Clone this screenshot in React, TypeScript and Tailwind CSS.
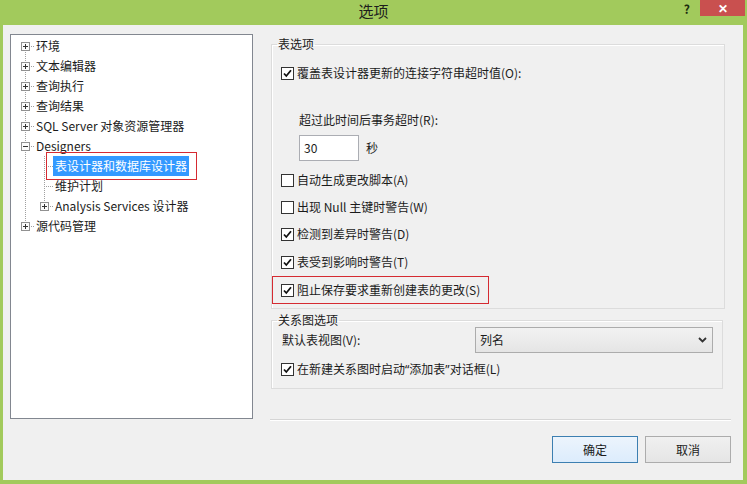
import React from "react";

const FONT = { fontFamily: '"Noto Sans CJK SC", "Noto Sans", sans-serif' };

type Line = "first" | "mid" | "last" | "none";

function Gutter({ w, cx, line, box, open }: { w: number; cx: number; line: Line; box?: boolean; open?: boolean }) {
  const x = cx + 0.5;
  const y1 = line === "first" ? 10 : 0;
  const y2 = line === "last" ? 10 : 20;
  return (
    <svg width={w} height={20} className="shrink-0">
      {line !== "none" && (
        <line x1={x} y1={y1} x2={x} y2={y2} stroke="#a0a0a0" strokeDasharray="1 1" />
      )}
      <line x1={cx} y1={10.5} x2={w} y2={10.5} stroke="#a0a0a0" strokeDasharray="1 1" />
      {box && (
        <g>
          <rect x={cx - 3.5} y={6.5} width={8} height={8} fill="#fbfbfb" stroke="#919191" />
          <line x1={cx - 2} y1={10.5} x2={cx + 3} y2={10.5} stroke="#333" />
          {!open && <line x1={x} y1={8} x2={x} y2={13} stroke="#333" />}
        </g>
      )}
    </svg>
  );
}

function Continue({ w, cx }: { w: number; cx: number }) {
  return (
    <svg width={w} height={20} className="shrink-0">
      <line x1={cx + 0.5} y1={0} x2={cx + 0.5} y2={20} stroke="#a0a0a0" strokeDasharray="1 1" />
    </svg>
  );
}

function Root({ label, line, open }: { label: string; line: Line; open?: boolean }) {
  return (
    <div className="flex h-[20px] items-center">
      <Gutter w={17} cx={8} line={line} box open={open} />
      <span className="pl-[2px] leading-[16px]">{label}</span>
    </div>
  );
}

function Child({ label, line, box, selected }: { label: string; line: Line; box?: boolean; selected?: boolean }) {
  return (
    <div className="flex h-[20px] items-center">
      <Continue w={17} cx={8} />
      <Gutter w={19} cx={10} line={line} box={box} />
      {selected ? (
        <span className="relative">
          <span className="block bg-[#3399ff] px-[2px] leading-[20px] text-white">{label}</span>
          <span className="absolute bottom-[-4px] left-[-7px] right-[-8px] top-[-4px] border border-[#d52a31]" />
        </span>
      ) : (
        <span className="pl-[2px] leading-[16px]">{label}</span>
      )}
    </div>
  );
}

function Check({ checked }: { checked?: boolean }) {
  return (
    <svg width={13} height={13} className="shrink-0">
      <rect x={0.5} y={0.5} width={12} height={12} fill="#fff" stroke="#333" />
      {checked && (
        <path d="M3 6.5 L5.3 9 L10 3.3" fill="none" stroke="#111" strokeWidth={1.8} />
      )}
    </svg>
  );
}

function CheckRow({ label, checked, className }: { label: React.ReactNode; checked?: boolean; className?: string }) {
  return (
    <div className={"flex h-[16px] items-center gap-[3px] pl-[9px] " + (className ?? "")}>
      <Check checked={checked} />
      <span className="leading-[16px]">{label}</span>
    </div>
  );
}

const Q = ({ c }: { c: string }) => <span style={{ fontFamily: '"Noto Sans", sans-serif' }}>{c}</span>;

export default function App() {
  return (
    <div className="flex h-[484px] w-[747px] flex-col bg-[#a2ca5c] text-[12px] text-[#1b1b1b]" style={FONT}>
      {/* title bar */}
      <div className="flex h-[25px] shrink-0 items-start">
        <div className="flex-1" />
        <div className="pt-[1px] text-[15px] leading-[20px] text-[#1d1d1d]">选项</div>
        <div className="flex flex-1 justify-end">
          <span className="mr-[10px] pt-[2px] text-[12px] font-bold leading-[14px] text-[#1c2c0c]">?</span>
          <div className="mr-[2px] flex h-[16px] w-[45px] items-center justify-center bg-[#c9504f] text-[12px] font-bold leading-none text-white">
            ✕
          </div>
        </div>
      </div>

      {/* client area */}
      <div className="mb-[4px] ml-[3px] mr-[4px] flex flex-1 flex-col bg-[#f0f0f0]">
        <div className="flex h-[394px]">
          {/* tree */}
          <div className="ml-[7px] mt-[9px] h-[385px] w-[243px] border border-[#828790] bg-white pl-[6px] pt-[1px]">
            <Root label="环境" line="first" />
            <Root label="文本编辑器" line="mid" />
            <Root label="查询执行" line="mid" />
            <Root label="查询结果" line="mid" />
            <Root label="SQL Server 对象资源管理器" line="mid" />
            <Root label="Designers" line="mid" open />
            <Child label="表设计器和数据库设计器" line="mid" selected />
            <Child label="维护计划" line="mid" />
            <Child label="Analysis Services 设计器" line="last" box />
            <Root label="源代码管理" line="last" />
          </div>

          {/* options */}
          <div className="ml-[18px] flex w-[454px] flex-col">
            <fieldset className="mt-[11px] border border-[#dcdcdc] pb-[10px] shadow-[inset_1px_1px_0_#fff]">
              <legend className="ml-[5px] px-[1px] leading-[16px]">表选项</legend>
              <CheckRow className="mt-[13px]" label="覆盖表设计器更新的连接字符串超时值(O):" checked />
              <div className="mt-[31px] pl-[27px] leading-[16px]">超过此时间后事务超时(R):</div>
              <div className="mt-[7px] flex items-center pl-[27px]">
                <div className="flex h-[26px] w-[60px] items-center border border-[#abadb3] bg-white pl-[4px]">30</div>
                <span className="ml-[7px]">秒</span>
              </div>
              <CheckRow className="mt-[11px]" label="自动生成更改脚本(A)" />
              <CheckRow className="mt-[11px]" label="出现 Null 主键时警告(W)" />
              <CheckRow className="mt-[11px]" label="检测到差异时警告(D)" checked />
              <CheckRow className="mt-[12px]" label="表受到影响时警告(T)" checked />
              <div className="relative mt-[12px]">
                <CheckRow label="阻止保存要求重新创建表的更改(S)" checked />
                <span className="absolute bottom-[-6px] left-0 top-[-6px] w-[217px] border border-[#d52a31]" />
              </div>
            </fieldset>

            <fieldset className="mt-[4px] w-[452px] border border-[#dcdcdc] pb-[11px] shadow-[inset_1px_1px_0_#fff]">
              <legend className="ml-[5px] px-[1px] leading-[14px]">关系图选项</legend>
              <div className="flex h-[26px] items-center pl-[10px]">
                <span className="w-[193px]">默认表视图(V):</span>
                <div className="flex h-[26px] w-[238px] items-center justify-between border border-[#acacac] bg-gradient-to-b from-[#f2f2f2] to-[#e5e5e5] pl-[4px] pr-[5px]">
                  <span>列名</span>
                  <svg width={9} height={6}>
                    <path d="M1 1 L4.5 4.5 L8 1" fill="none" stroke="#333" strokeWidth={1.8} />
                  </svg>
                </div>
              </div>
              <CheckRow
                className="mt-[8px]"
                label={
                  <>
                    在新建关系图时启动<Q c="“" />添加表<Q c="”" />对话框(L)
                  </>
                }
                checked
              />
            </fieldset>
          </div>
        </div>

        {/* separator */}
        <div className="ml-[267px] h-[2px] w-[461px] border-b border-t border-b-white border-t-[#d5d5d5]" />

        {/* buttons */}
        <div className="mr-[12px] mt-[15px] flex justify-end gap-[7px]">
          <button className="h-[27px] w-[86px] border border-[#3c7fb1] bg-gradient-to-b from-[#ecf4fc] to-[#dcecfc] text-[12px]">
            确定
          </button>
          <button className="h-[27px] w-[86px] border border-[#acacac] bg-gradient-to-b from-[#f0f0f0] to-[#e5e5e5] text-[12px]">
            取消
          </button>
        </div>
      </div>
    </div>
  );
}
